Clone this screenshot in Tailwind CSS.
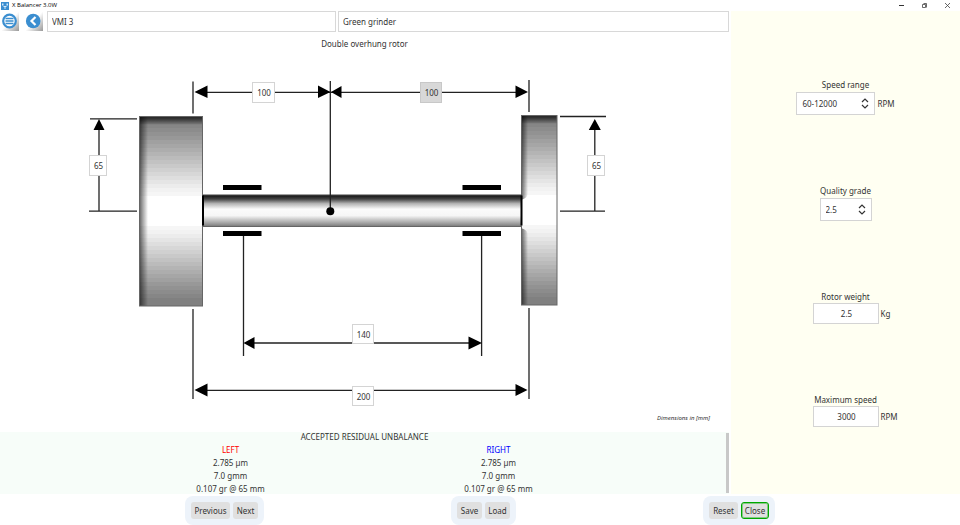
<!DOCTYPE html>
<html lang="en">
  <head>
    <meta charset="UTF-8" />
    <meta name="viewport" content="width=device-width, initial-scale=1.0" />
    <script src="https://cdn.jsdelivr.net/npm/@tailwindcss/browser@4"></script>
    <title>X Balancer 3.0W</title>
  </head>

  <body class="flex flex-col min-h-screen bg-white text-[#333] font-['Noto_Sans',sans-serif] text-[8px] leading-[13px]">
    <!-- Title bar -->
    <header class="flex items-center h-[11px] pr-[9px]">
      <svg class="w-2 h-2 ml-px mr-[3px]" viewBox="0 0 8 8">
        <rect width="8" height="8" fill="#3b8ed0" />
        <path d="M1 1.5h1.5v2H1zM5.5 1.5H7v2H5.5zM2.5 4h3v1h-3zM3.5 5h1v2h-1z" fill="#d6eafa" />
      </svg>
      <h1 class="flex-1 font-['Open_Sans',sans-serif] text-[6px] leading-[11px] text-black">X Balancer 3.0W</h1>
      <div class="flex items-center gap-4">
        <button aria-label="Minimize" class="w-[7px] h-[7px]">
          <svg viewBox="0 0 7 7"><path d="M1 3.5h5" stroke="#333" /></svg>
        </button>
        <button aria-label="Restore" class="w-[7px] h-[7px]">
          <svg viewBox="0 0 7 7" fill="none" stroke="#444"><path d="M1.500 2.500h3v3h-3zM2.500 1.500h3v4" stroke-width=".8" /></svg>
        </button>
        <button aria-label="Exit" class="w-[7px] h-[7px]">
          <svg viewBox="0 0 7 7" stroke="#444" stroke-width=".8"><path d="M1 1l5 5M6 1l-5 5" /></svg>
        </button>
      </div>
    </header>

    <div class="flex flex-1">
      <main class="flex flex-1 flex-col">
        <!-- Toolbar -->
        <div class="flex gap-[2px] pl-px pr-[2px] h-[21px]">
          <button aria-label="Menu" class="w-[18px] h-[20px] mr-1 bg-linear-to-br from-white from-50% to-[#999]">
            <svg viewBox="0 0 18 20">
              <circle cx="8.500" cy="10" r="6.300" fill="#fff" stroke="#3b8ed0" stroke-width="2.200" />
              <path d="M4.500 7.500h8M4.500 10h8M4.500 12.500h8" stroke="#3b8ed0" stroke-width="1.600" />
            </svg>
          </button>
          <button aria-label="Back" class="w-[18px] h-[20px] mr-[2px] bg-linear-to-br from-white from-50% to-[#999]">
            <svg viewBox="0 0 18 20">
              <circle cx="8.200" cy="10" r="7.300" fill="#3b8ed0" />
              <path d="M10.500 6l-4 4 4 4" fill="none" stroke="#fff" stroke-width="2.200" />
            </svg>
          </button>
          <input aria-label="Machine" value="VMI 3" class="w-[289px] px-1 border border-[#d8d8d8] bg-white" />
          <input aria-label="Rotor name" value="Green grinder" class="flex-1 min-w-0 px-1 border border-[#d8d8d8] bg-white" />
        </div>

        <h2 class="mt-[5px] pr-[2px] text-center">Double overhung rotor</h2>

        <!-- Rotor drawing -->
        <div class="pr-[2px] mt-[22px]">
          <div class="relative w-[561px] h-[336px] mx-auto">
            <svg class="w-full h-full" viewBox="84 72 561 336">
              <defs>
                <linearGradient id="shaft" x2="0" y2="1">
                  <stop offset="0" stop-color="#444" />
                  <stop offset=".06" stop-color="#222" />
                  <stop offset=".14" stop-color="#444" />
                  <stop offset=".28" stop-color="#b4b4b4" />
                  <stop offset=".45" stop-color="#fbfbfb" />
                  <stop offset=".65" stop-color="#f6f6f6" />
                  <stop offset=".95" stop-color="#888" />
                  <stop offset="1" stop-color="#555" />
                </linearGradient>
                <linearGradient id="edge">
                  <stop offset="0" stop-color="#000" stop-opacity=".65" />
                  <stop offset=".35" stop-color="#000" stop-opacity=".4" />
                  <stop offset="1" stop-color="#000" stop-opacity="0" />
                </linearGradient>
                <linearGradient id="top" x2="0" y2="1">
                  <stop offset="0" stop-color="#000" stop-opacity=".75" />
                  <stop offset=".3" stop-color="#000" stop-opacity=".6" />
                  <stop offset="1" stop-color="#000" stop-opacity="0" />
                </linearGradient>
              </defs>

              <g id="leftWheel"></g>
              <rect x="139" y="116" width="64" height="9" fill="url(#top)" />
              <rect x="139" y="116" width="9" height="190" fill="url(#edge)" />
              <rect x="139.500" y="116.500" width="63" height="189.500" fill="none" stroke="#666" />

              <g id="rightWheel"></g>
              <rect x="521" y="115" width="36" height="9" fill="url(#top)" />
              <path d="M521 115h7v78q0 5-7 7zM521 228q7 2 7 7v70h-7z" fill="url(#edge)" />
              <rect x="521.500" y="115.500" width="35.500" height="189.500" fill="none" stroke="#666" />

              <rect x="203" y="194.500" width="319" height="32.500" fill="url(#shaft)" />
              <path d="M203 195.500v30M521.500 195.500v30" stroke="#000" stroke-width="2" />

              <!-- Bearings -->
              <path d="M223 187.500h38.500M223 233.500h38.500M462.500 187.500h38.500M462.500 233.500h38.500" stroke="#000" stroke-width="5" />

              <!-- Dimension lines -->
              <g stroke="#222" stroke-width="1.300" fill="none">
                <path d="M193 81.500v32M330.300 81v130M529 80v32M200 92.300h325" />
                <path d="M90 118.800h47M89 211.200h48M99 125v86" />
                <path d="M560 116.500h46M560 211.200h45M594.800 125v86" />
                <path d="M243.500 236v120M481.600 236v120M250 343h225" />
                <path d="M193 309v90M529 308v91M200 390.400h325" />
              </g>
              <path
                d="M194.500 92l13-6.500v12.500zM330.500 92l-12.500-6.500v12.500zM331 92l10.500-6v12zM528 92l-12.500-6.500v12.500zM99 119l5.500 11h-11zM594.800 119l6 11h-12zM243.500 343l11-6v12zM482 343l-13.500-6.500v13zM194.500 390l13-6.500v13zM527.500 390l-12-6v12z"
              />
              <circle cx="330.300" cy="211.200" r="4" />
            </svg>
            <input aria-label="Left plane to center" value="100" class="absolute left-[168px] top-[10px] w-[23px] h-[21px] pl-px text-center border border-[#d4d4d4] bg-white" />
            <input aria-label="Center to right plane" value="100" class="absolute left-[336px] top-[10px] w-[22px] h-[21px] pl-px text-center border border-[#c8c8c8] bg-[#d8d8d8]" />
            <input aria-label="Left radius" value="65" class="absolute left-[5px] top-[83px] w-[18px] h-[21px] pl-px text-center border border-[#d4d4d4] bg-white" />
            <input aria-label="Right radius" value="65" class="absolute left-[503px] top-[83px] w-[18px] h-[21px] pl-px text-center border border-[#d4d4d4] bg-white" />
            <input aria-label="Bearing distance" value="140" class="absolute left-[268px] top-[252px] w-[22px] h-[20px] pl-px text-center border border-[#d4d4d4] bg-white" />
            <input aria-label="Plane distance" value="200" class="absolute left-[268px] top-[314px] w-[22px] h-[20px] pl-px text-center border border-[#d4d4d4] bg-white" />
          </div>
        </div>
        <p class="mt-1 mb-auto pr-[21px] text-right text-[6px] italic">Dimensions in [mm]</p>

        <!-- Results -->
        <section class="flex mr-[2px] h-[62px] bg-[#f7fdf9]">
          <div class="flex-1 -mr-[3px] -mt-[2px]">
            <h3 class="text-center">ACCEPTED RESIDUAL UNBALANCE</h3>
            <div class="flex justify-center gap-[198px] text-center">
              <div class="w-[70px]">
                <h4 class="text-[#f00]">LEFT</h4>
                <p>2.785 µm</p>
                <p>7.0 gmm</p>
                <p>0.107 gr @ 65 mm</p>
              </div>
              <div class="w-[70px]">
                <h4 class="text-[#00f]">RIGHT</h4>
                <p>2.785 µm</p>
                <p>7.0 gmm</p>
                <p>0.107 gr @ 65 mm</p>
              </div>
            </div>
          </div>
          <div class="w-[3px] my-px bg-[#c8c8c8]"></div>
        </section>
      </main>

      <!-- Parameters -->
      <aside class="w-[229px] pt-[67px] bg-[#fffff2]">
        <div class="flex flex-col items-center h-[106px]">
          <label for="speed">Speed range</label>
          <div class="flex items-center gap-[2px] pt-px">
            <div class="relative">
              <select id="speed" class="appearance-none w-[79px] h-[23px] px-[5px] border border-[#d4d4d4] bg-white">
                <option>60-12000</option>
              </select>
              <svg class="absolute right-[6px] top-[6px] w-[8px] h-[11px] pointer-events-none" viewBox="0 0 8 11" fill="none" stroke="#333" stroke-width="1.200"><path d="M1 4l3-3 3 3M1 7l3 3 3-3" /></svg>
            </div>
            <span>RPM</span>
          </div>
        </div>
        <div class="flex flex-col items-center h-[106px]">
          <label for="grade">Quality grade</label>
          <div class="relative mt-px">
            <select id="grade" class="appearance-none w-[52px] h-[23px] px-[5px] border border-[#d4d4d4] bg-white">
              <option>2.5</option>
            </select>
            <svg class="absolute right-[6px] top-[6px] w-[8px] h-[11px] pointer-events-none" viewBox="0 0 8 11" fill="none" stroke="#333" stroke-width="1.200"><path d="M1 4l3-3 3 3M1 7l3 3 3-3" /></svg>
          </div>
        </div>
        <div class="flex flex-col items-center h-[103px]">
          <label for="weight">Rotor weight</label>
          <div class="grid grid-cols-[1fr_auto_1fr] items-center gap-[2px] w-full">
            <span></span>
            <input id="weight" value="2.5" class="w-[66px] h-[21px] pl-[2px] text-center border border-[#d4d4d4] bg-white" />
            <span>Kg</span>
          </div>
        </div>
        <div class="flex flex-col items-center">
          <label for="maxSpeed">Maximum speed</label>
          <div class="grid grid-cols-[1fr_auto_1fr] items-center gap-[2px] w-full">
            <span></span>
            <input id="maxSpeed" value="3000" class="w-[66px] h-[21px] pl-[2px] text-center border border-[#d4d4d4] bg-white" />
            <span>RPM</span>
          </div>
        </div>
      </aside>
    </div>

    <!-- Actions -->
    <footer class="flex justify-between h-[31px] pt-[2px] pl-[185px] pr-[185px]">
      <div class="flex items-center gap-[3px] h-[29px] px-[6px] rounded-lg bg-[#edf3fa]">
        <button class="h-[17px] w-[39px] rounded-[3px] bg-[#e0e0e0]">Previous</button>
        <button class="h-[17px] w-[25px] rounded-[3px] bg-[#e0e0e0]">Next</button>
      </div>
      <div class="flex items-center gap-[3px] h-[29px] px-[6px] rounded-lg bg-[#edf3fa]">
        <button class="h-[17px] w-[25px] rounded-[3px] bg-[#e0e0e0]">Save</button>
        <button class="h-[17px] w-[25px] rounded-[3px] bg-[#e0e0e0]">Load</button>
      </div>
      <div class="flex items-center gap-[3px] h-[29px] px-[6px] rounded-lg bg-[#edf3fa]">
        <button class="h-[17px] w-[29px] rounded-[3px] bg-[#e0e0e0]">Reset</button>
        <button class="h-[17px] w-[28px] rounded-[3px] border border-[#00a800] ring-1 ring-inset ring-[#00a800]/40 bg-[#e0e0e0]">Close</button>
      </div>
    </footer>

    <script>
      const tones = [128, 134, 140, 146, 152, 160, 166, 173, 180, 187, 194, 201, 208, 215, 222, 229, 236, 242, 246];

      // the wheel is shaded in flat bands, mirrored around its white middle
      const drawWheel = (id, x, y, width) => {
        const band = (top, height, tone) =>
          `<rect x="${x}" y="${top}" width="${width}" height="${height}" fill="rgb(${tone},${tone},${tone})" shape-rendering="crispEdges" />`;
        let bands = band(y, 190, 128) + band(y + 80, 30, 255);
        tones.forEach((tone, index) => {
          bands += band(y + 4 + index * 4, 4, tone);
          bands += band(y + 182 - index * 4, 4, tone);
        });
        document.querySelector(id).innerHTML = bands;
      };

      drawWheel("#leftWheel", 139, 116, 64);
      drawWheel("#rightWheel", 521, 115, 36);
    </script>
  </body>
</html>
